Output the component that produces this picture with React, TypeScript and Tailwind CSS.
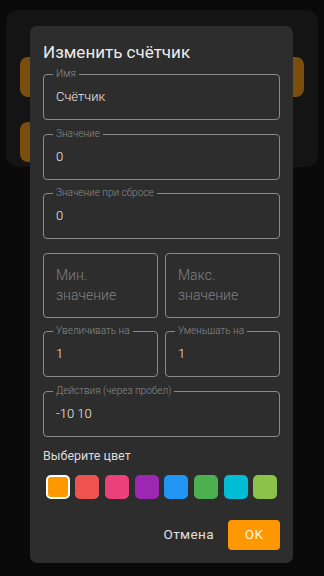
import React from "react";

const font = { fontFamily: "Roboto, 'Noto Sans', sans-serif" };

function Field({ label, value }: { label: string; value: string }) {
  return (
    <div className="relative h-[46px] rounded-[4px] border border-[#8a8a8a] flex items-center px-[12px]">
      <span className="absolute -top-[8px] left-[9px] px-[3px] bg-[#2d2d2d] text-[10px] leading-[14px] font-light text-[#8c8c8c]">
        {label}
      </span>
      <span className="text-[13px] font-light text-[#ececec]">{value}</span>
    </div>
  );
}

function Placeholder({ lines }: { lines: string[] }) {
  return (
    <div className="h-[65px] rounded-[4px] border border-[#8a8a8a] flex flex-col justify-center px-[12px] text-[14px] leading-[20px] font-light text-[#808080]">
      {lines.map((l) => (
        <span key={l}>{l}</span>
      ))}
    </div>
  );
}

const colors = ["#FF9800", "#EF5350", "#EC407A", "#9C27B0", "#2196F3", "#4CAF50", "#00BCD4", "#8BC34A"];

export default function App() {
  return (
    <div className="relative w-[324px] h-[576px] bg-[#0a0a0a] overflow-hidden" style={font}>
      {/* background app (dimmed) */}
      <div className="pt-[10px] px-[6px]">
        <div className="h-[157px] rounded-[12px] bg-[#141414] px-[14px] pt-[47px] flex flex-col gap-[25px]">
          <div className="flex justify-between">
            <div className="w-[44px] h-[40px] rounded-[8px] bg-[#7a4e0c]" />
            <div className="w-[44px] h-[40px] rounded-[8px] bg-[#7a4e0c]" />
          </div>
          <div className="flex">
            <div className="w-[44px] h-[40px] rounded-[8px] bg-[#7a4e0c]" />
          </div>
        </div>
      </div>

      {/* dialog */}
      <div className="absolute left-[30px] top-[26px] w-[263px] h-[537px] rounded-[7px] bg-[#2d2d2d] px-[13px] pt-[14px]">
        <div className="text-[17px] leading-[24px] text-[#ececec]">Изменить счётчик</div>
        <div className="mt-[10px] flex flex-col gap-[13.5px]">
          <Field label="Имя" value="Счётчик" />
          <Field label="Значение" value="0" />
          <Field label="Значение при сбросе" value="0" />
          <div className="grid grid-cols-2 gap-[7px]">
            <Placeholder lines={["Мин.", "значение"]} />
            <Placeholder lines={["Макс.", "значение"]} />
          </div>
          <div className="grid grid-cols-2 gap-[7px]">
            <Field label="Увеличивать на" value="1" />
            <Field label="Уменьшать на" value="1" />
          </div>
          <Field label="Действия (через пробел)" value="-10 10" />
        </div>
        <div className="mt-[10px] text-[12.5px] leading-[18px] text-[#dcdcdc]">Выберите цвет</div>
        <div className="mt-[10px] flex justify-around">
          {colors.map((c, i) => (
            <div
              key={c}
              className={
                i === 0
                  ? "w-[24px] h-[24px] rounded-[5px] border-[2.5px] border-white"
                  : "w-[24px] h-[24px] rounded-[5px]"
              }
              style={{ backgroundColor: c }}
            />
          ))}
        </div>
        <div className="mt-[21px] flex justify-end items-center gap-[14px]">
          <span className="text-[13.5px] tracking-[0.4px] text-[#e0e0e0]">Отмена</span>
          <div className="w-[52px] h-[30px] rounded-[4px] bg-[#FF9800] flex items-center justify-center text-[13.5px] tracking-[0.4px] text-[#fff3e0]">
            OK
          </div>
        </div>
      </div>
    </div>
  );
}
